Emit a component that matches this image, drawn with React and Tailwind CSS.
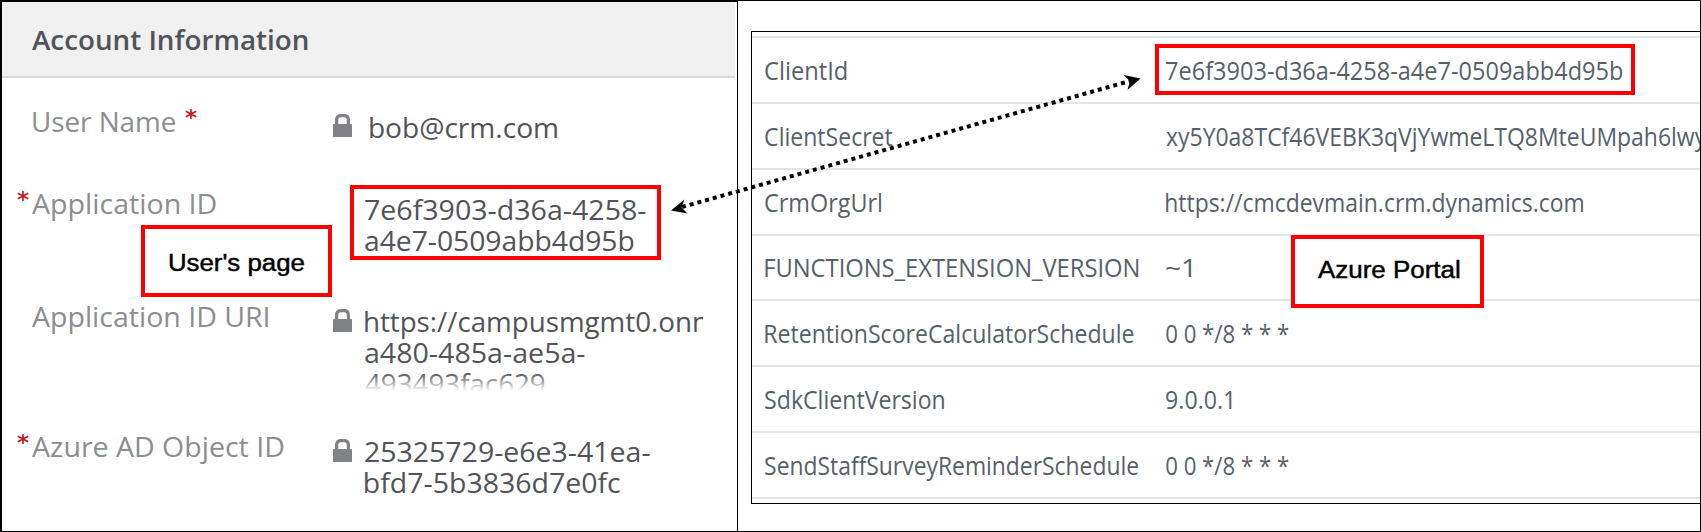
import { useLayoutEffect, useRef } from "react";

/* Text whose ink starts at the box's left edge and spans `w` pixels. */
function Fit({ w, className = "", children }) {
  const ref = useRef(null);
  useLayoutEffect(() => {
    const el = ref.current;
    const cs = getComputedStyle(el);
    const ctx = document.createElement("canvas").getContext("2d");
    ctx.font = `${cs.fontWeight} ${cs.fontSize} ${cs.fontFamily}`;
    const m = ctx.measureText(el.textContent);
    const s = w / (m.actualBoundingBoxLeft + m.actualBoundingBoxRight);
    el.style.transform = `translateX(${m.actualBoundingBoxLeft * s}px) scaleX(${s})`;
  }, [w]);
  return (
    <span ref={ref} className={"block w-max origin-left whitespace-pre " + className}>
      {children}
    </span>
  );
}

function Lock({ className = "" }) {
  return (
    <svg viewBox="0 0 19 23" className={"h-[23px] w-[19px] shrink-0 " + className}>
      <path d="M3.6 11V6.4Q3.6 1.6 8 1.6H11Q15.4 1.6 15.4 6.4V11" fill="none" stroke="#808285" strokeWidth="3.3" />
      <rect x="0" y="10" width="19" height="13" rx="0.4" fill="#808285" />
    </svg>
  );
}

function Star() {
  return (
    <svg viewBox="0 0 12 10" className="h-[10px] w-[12px] shrink-0">
      <path d="M6 0V10M0.8 2.2L11.2 7.8M11.2 2.2L0.8 7.8" stroke="#c4161c" strokeWidth="1.6" fill="none" />
    </svg>
  );
}

const settings = [
  ["ClientId", 81.5, "7e6f3903-d36a-4258-a4e7-0509abb4d95b", 456.5],
  ["ClientSecret", 127.5, "xy5Y0a8TCf46VEBK3qVjYwmeLTQ8MteUMpah6lwy", 541],
  ["CrmOrgUrl", 116.5, "https://cmcdevmain.crm.dynamics.com", 417],
  ["FUNCTIONS_EXTENSION_VERSION", 374, "~1", 26],
  ["RetentionScoreCalculatorSchedule", 369, "0 0 */8 * * *", 123],
  ["SdkClientVersion", 179, "9.0.0.1", 66],
  ["SendStaffSurveyReminderSchedule", 373.5, "0 0 */8 * * *", 123],
];

function AccountPanel() {
  return (
    <section className="flex w-[737px] shrink-0 flex-col border-l-2 border-t-2 border-black text-[26.5px] leading-[31px] text-[#505358]">
      <header className="mr-[2px] h-[76px] shrink-0 border-b-2 border-[#d9d9d9] bg-[#f0f0f0] pl-[30px] pt-[23px] font-semibold">
        <Fit w={275.5}>Account Information</Fit>
      </header>
      <div className="flex h-[82px] shrink-0 pt-[27px]">
        <div className="flex w-[331px] shrink-0 gap-[9px] pl-[31px] text-[#8b8d91]">
          <div className="w-[143px] pt-[2px]"><Fit w={142.5}>User Name</Fit></div>
          <div className="pt-[4px]"><Star /></div>
        </div>
        <Lock className="mt-[9px]" />
        <div className="pl-[18px] pt-[8px]"><Fit w={187.5}>bob@crm.com</Fit></div>
      </div>
      <div className="flex h-[113px] shrink-0 pt-[27px]">
        <div className="flex w-[363px] shrink-0 gap-[3px] pl-[15px] text-[#8b8d91]">
          <div className="pt-[4px]"><Star /></div>
          <div className="pt-[2px]"><Fit w={184}>Application ID</Fit></div>
        </div>
        <div className="pt-[8px]">
          <Fit w={281}>7e6f3903-d36a-4258-</Fit>
          <Fit w={268.5}>a4e7-0509abb4d95b</Fit>
        </div>
      </div>
      <div className="flex h-[129px] shrink-0 pt-[27px]">
        <div className="w-[331px] shrink-0 pl-[30px] pt-[2px] text-[#8b8d91]">
          <Fit w={236}>Application ID URI</Fit>
        </div>
        <Lock className="mt-[9px]" />
        <div className="relative ml-[13px] mt-[7px] h-[84px] w-[338px] overflow-hidden">
          <Fit w={351}>https://campusmgmt0.onm</Fit>
          <Fit w={220}>a480-485a-ae5a-</Fit>
          <Fit w={179.5}>493493fac629</Fit>
          <div className="absolute inset-x-0 bottom-0 h-[18px] bg-linear-to-b from-white/0 to-white" />
        </div>
      </div>
      <div className="flex pt-[27px]">
        <div className="flex w-[331px] shrink-0 gap-[3px] pl-[15px] text-[#8b8d91]">
          <div className="pt-[5px]"><Star /></div>
          <div className="pt-[3px]"><Fit w={251.5}>Azure AD Object ID</Fit></div>
        </div>
        <Lock className="mt-[10px]" />
        <div className="pl-[13px] pt-[8px]">
          <Fit w={285}>25325729-e6e3-41ea-</Fit>
          <Fit w={255}>bfd7-5b3836d7e0fc</Fit>
        </div>
      </div>
    </section>
  );
}

function PortalPanel() {
  return (
    <section className="min-w-0 grow border-x border-t border-black pl-[13px] pt-[30px]">
      <div className="h-[473px] overflow-hidden border-y border-l border-black pt-[4px] text-[26px] leading-[36px] text-[#56606b]">
        <div className="h-[2px] bg-[#dde5ea]" />
        {settings.map(([key, kw, value, vw]) => (
          <div key={key} className="flex h-[65.85px] items-center border-b-2 border-[#dde5ea] pl-[13px]">
            <div className="w-[400.5px] shrink-0"><Fit w={kw}>{key}</Fit></div>
            <div><Fit w={vw}>{value}</Fit></div>
          </div>
        ))}
      </div>
    </section>
  );
}

export default function App() {
  return (
    <div className="relative flex h-[532px] w-[1701px] overflow-hidden border-b border-black bg-white font-['Open_Sans','Noto_Sans',sans-serif]">
      <AccountPanel />
      <PortalPanel />
      <div className="absolute left-[350px] top-[185px] h-[75px] w-[311px] border-4 border-[#ff0000]" />
      <div className="absolute left-[1155px] top-[44px] h-[51px] w-[480px] border-4 border-[#ff0000]" />
      <div className="absolute left-[141px] top-[225px] h-[72px] w-[191px] border-4 border-[#ff0000] bg-white pl-[24px] pt-[19px] font-['Liberation_Sans',Arial,sans-serif] text-[23px] leading-[30px] text-black [-webkit-text-stroke:0.45px_black]">
        <Fit w={135}>User's page</Fit>
      </div>
      <div className="absolute left-[1291px] top-[235px] h-[73px] w-[193px] border-4 border-[#ff0000] bg-white pl-[22.5px] pt-[16px] font-['Liberation_Sans',Arial,sans-serif] text-[23px] leading-[30px] text-black [-webkit-text-stroke:0.45px_black]">
        <Fit w={141.5}>Azure Portal</Fit>
      </div>
      <svg viewBox="0 0 1701 532" className="pointer-events-none absolute left-0 top-0 h-[532px] w-[1701px]">
        <path d="M682 207L1130 81" stroke="#000" strokeWidth="4" strokeDasharray="4 4" fill="none" />
        <path d="M671 210.5L684.5 199.5L681.5 207.5L687.5 213.5Z" />
        <path d="M1140.5 78.5L1123.5 75L1130 81L1127.5 90Z" />
      </svg>
    </div>
  );
}
